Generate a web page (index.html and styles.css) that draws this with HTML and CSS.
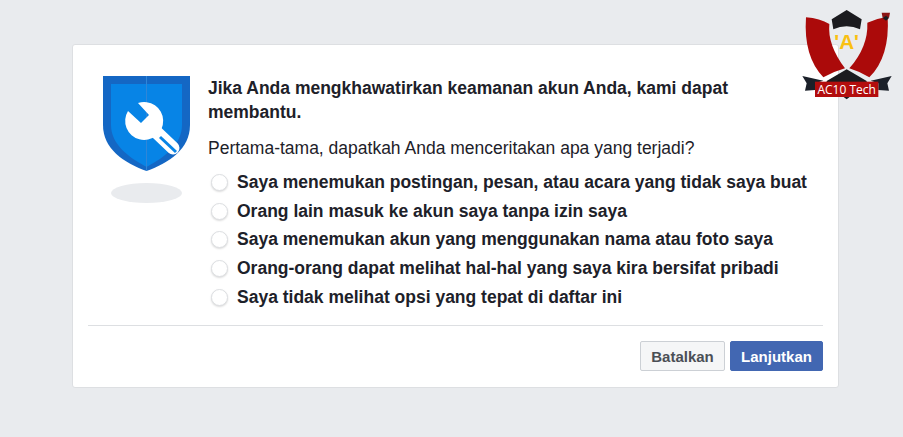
FILE: index.html
```html
<!DOCTYPE html>
<html lang="en">
<head>
    <meta charset="UTF-8">
    <title>Keamanan Akun</title>
    <link rel="stylesheet" href="styles.css">
</head>
<body>
    <div class="card">
        <div class="content">
            <svg class="shield" width="87" height="127" viewBox="0 0 87 127">
                <path d="M0 0H87V49C87 73 66 87 43.500 95C21 87 0 73 0 49Z" fill="#1467c4"/>
                <path d="M8 8H79V49C79 68 62 81 43.500 91C25 81 8 68 8 49Z" fill="#0784e6"/>
                <path d="M43.500 0V95" stroke="#2f86d8" stroke-width="1"/>
                <path d="M25 35L38 47L46 39L35 27A19 19 0 1 1 25 35Z" fill="#fff"/>
                <path d="M50 53L70 72" stroke="#fff" stroke-width="13" stroke-linecap="round"/>
                <path d="M57 61L73 76" stroke="#0784e6" stroke-width="3"/>
                <ellipse cx="43.500" cy="117" rx="35.500" ry="10" fill="#e9ebee"/>
            </svg>
            <div class="main">
                <h2 class="title">Jika Anda mengkhawatirkan keamanan akun Anda, kami dapat membantu.</h2>
                <p class="question">Pertama-tama, dapatkah Anda menceritakan apa yang terjadi?</p>
                <div class="options">
                    <label class="option"><span class="radio"></span>Saya menemukan postingan, pesan, atau acara yang tidak saya buat</label>
                    <label class="option"><span class="radio"></span>Orang lain masuk ke akun saya tanpa izin saya</label>
                    <label class="option"><span class="radio"></span>Saya menemukan akun yang menggunakan nama atau foto saya</label>
                    <label class="option"><span class="radio"></span>Orang-orang dapat melihat hal-hal yang saya kira bersifat pribadi</label>
                    <label class="option"><span class="radio"></span>Saya tidak melihat opsi yang tepat di daftar ini</label>
                </div>
            </div>
        </div>
        <div class="footer">
            <button class="btn btn-cancel">Batalkan</button>
            <button class="btn btn-next">Lanjutkan</button>
        </div>
    </div>

    <svg class="logo" width="113" height="105" viewBox="0 0 339 315">
        <path d="M48 52Q90 55 118 72Q112 135 165 205Q130 215 100 232Q40 170 48 52Z" fill="#ab0a0a"/>
        <path d="M232 68Q260 55 293 50Q300 170 238 232Q210 215 178 205Q235 140 232 68Z" fill="#ab0a0a"/>
        <path d="M125 58L170 30L215 58L210 88Q170 70 130 88Z" fill="#1b1b1f"/>
        <path d="M37 228L100 242L75 250V270L45 272L50 250Z" fill="#1b2029"/>
        <path d="M305 228L242 242L265 250V270L297 272L292 250Z" fill="#1b2029"/>
        <path d="M110 243L170 208L230 243V290H180L170 298L160 290H110Z" fill="#1b1b1f"/>
        <path d="M275 38H300L297 54L288 50L278 54Z" fill="#8c1414"/>
        <path d="M278 54L288 47L297 54L288 62Z" fill="#1b1b1f"/>
        <text class="logo-a" x="170" y="148">'A'</text>
        <rect x="75" y="245" width="190" height="46" fill="#b30d0d"/>
        <text class="logo-label" x="170" y="281">AC10 Tech</text>
    </svg>
</body>
</html>
```

FILE: styles.css
```css
body {
    margin: 0;
    padding: 44px 0 49px 72px;
    background-color: #e9ebee;
    font-family: "Liberation Sans", Arial, sans-serif;
    color: #1d2129;
}
.card {
    box-sizing: border-box;
    width: 767px;
    height: 344px;
    padding: 31px 15px 16px;
    background-color: #ffffff;
    border: 1px solid #dddfe2;
    border-radius: 3px;
}
.content {
    display: flex;
    gap: 18px;
    padding-left: 15px;
    height: 249px;
    border-bottom: 1px solid #dddfe2;
}
.shield {
    flex: none;
}
.main {
    flex: 1;
}
.title {
    margin: 0;
    font-size: 17.500px;
    line-height: 24px;
    font-weight: bold;
}
.question {
    margin: 12px 0 0;
    font-size: 17.500px;
    line-height: 24px;
}
.options {
    margin-top: 8px;
}
.option {
    display: flex;
    align-items: center;
    height: 28.800px;
    font-size: 17.500px;
    font-weight: bold;
}
.radio {
    box-sizing: border-box;
    flex: none;
    width: 17px;
    height: 17px;
    margin: 0 9px 0 3px;
    background-color: #ffffff;
    border: 1px solid #dddfe2;
    border-radius: 50%;
    box-shadow: 0 1px 2px rgba(0, 0, 0, 0.15);
}
.footer {
    display: flex;
    justify-content: flex-end;
    gap: 5px;
    margin-top: 15px;
}
.btn {
    box-sizing: border-box;
    height: 30px;
    padding: 0 10px;
    border-radius: 2px;
    font-family: inherit;
    font-size: 15px;
    font-weight: bold;
}
.btn-cancel {
    width: 85px;
    background-color: #f5f6f7;
    border: 1px solid #ccd0d5;
    color: #4b4f56;
}
.btn-next {
    width: 93px;
    background-color: #4267b2;
    border: 1px solid #4267b2;
    color: #ffffff;
}
.logo {
    position: absolute;
    top: 0;
    left: 790px;
}
.logo-a {
    font-family: "Liberation Sans", Arial, sans-serif;
    font-size: 62px;
    font-weight: bold;
    fill: #f9c012;
    text-anchor: middle;
}
.logo-label {
    font-family: "Open Sans", sans-serif;
    font-size: 36px;
    fill: #ffffff;
    text-anchor: middle;
}
```
